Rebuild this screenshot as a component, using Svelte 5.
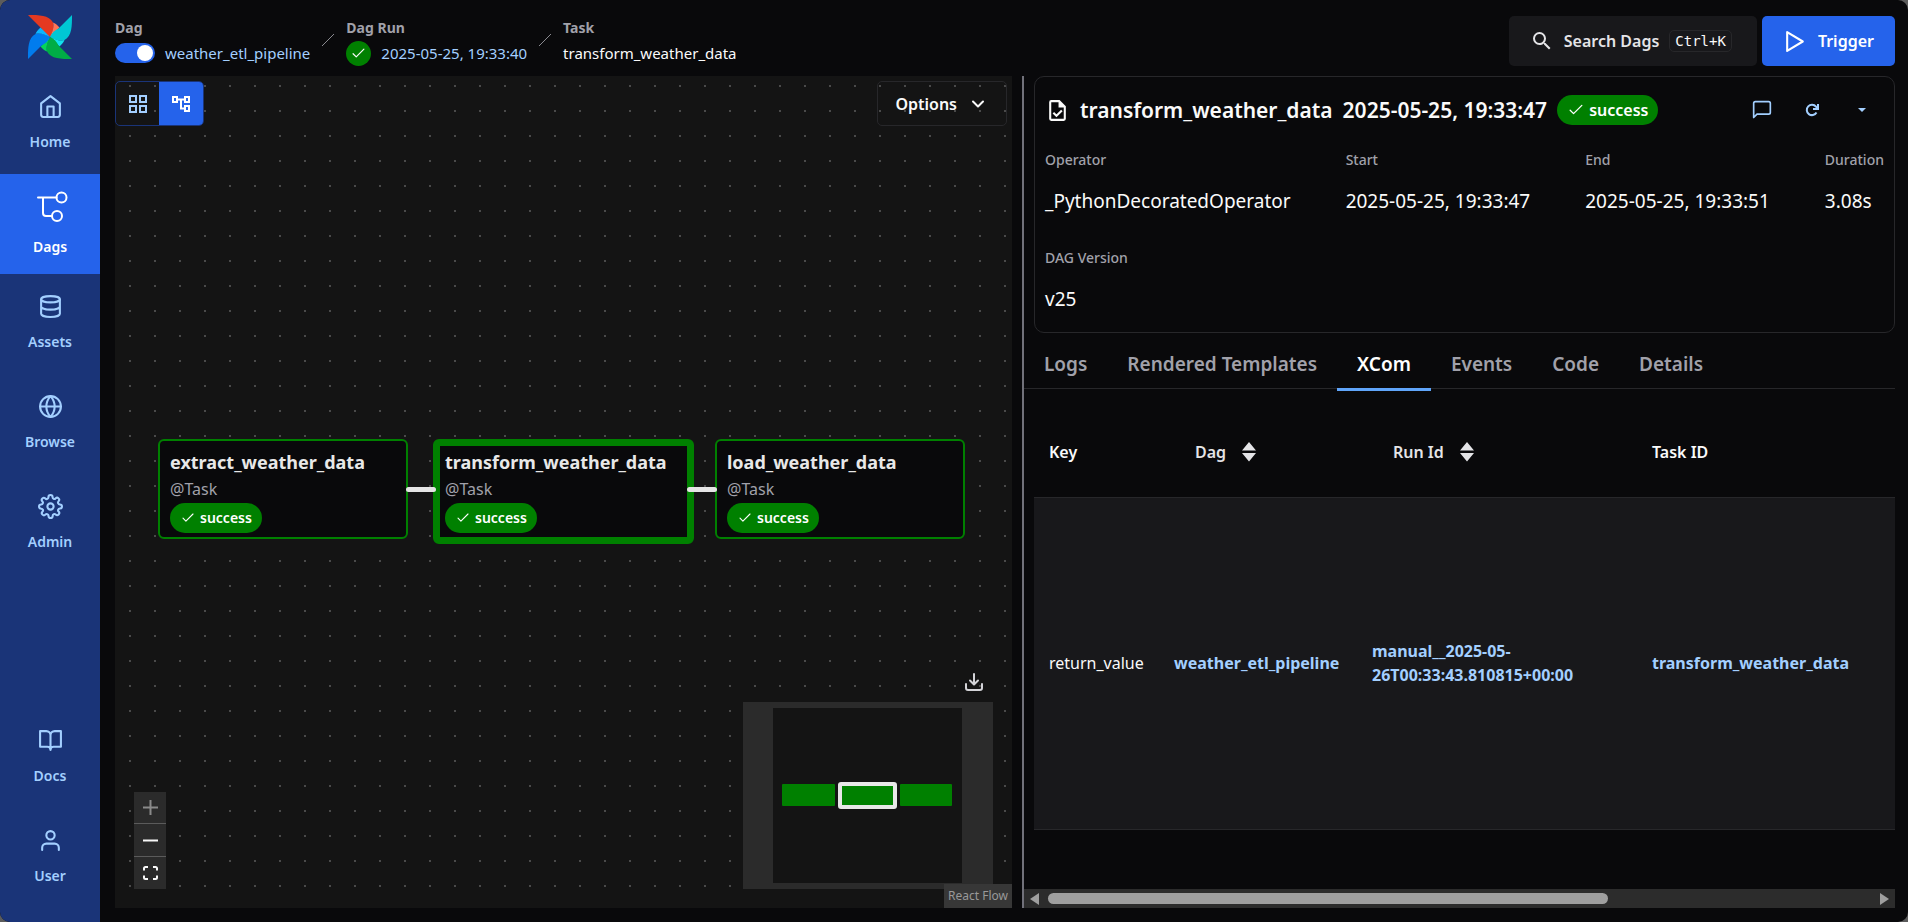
<script>
  const nav = [
    { label: 'Home', icon: 'home' },
    { label: 'Dags', icon: 'dags', active: true },
    { label: 'Assets', icon: 'database' },
    { label: 'Browse', icon: 'globe' },
    { label: 'Admin', icon: 'settings' }
  ];
  const navBottom = [
    { label: 'Docs', icon: 'book' },
    { label: 'User', icon: 'user' }
  ];
  const blades = [
    { angle: 0, dark: '#e43921', light: '#ff7557' },
    { angle: 90, dark: '#00c7d4', light: '#11e1ee' },
    { angle: 180, dark: '#00ad46', light: '#04d659' },
    { angle: 270, dark: '#017cee', light: '#0cb6ff' }
  ];
  const nodes = [
    { name: 'extract_weather_data', left: 43, width: 250 },
    { name: 'transform_weather_data', left: 318, width: 261, selected: true },
    { name: 'load_weather_data', left: 600, width: 250 }
  ];
  const edges = [291, 572];
  const stats = [
    { label: 'Operator', value: '_PythonDecoratedOperator' },
    { label: 'Start', value: '2025-05-25, 19:33:47' },
    { label: 'End', value: '2025-05-25, 19:33:51' },
    { label: 'Duration', value: '3.08s' }
  ];
  const tabs = ['Logs', 'Rendered Templates', 'XCom', 'Events', 'Code', 'Details'];
  let activeTab = $state('XCom');
  let enabled = $state(true);
</script>

{#snippet check(size)}
  <svg width={size} height={size} viewBox="0 0 12 12" fill="none" stroke="currentColor" stroke-width="1.1" stroke-linecap="round" stroke-linejoin="round" aria-hidden="true"><path d="M1 6.2 3.9 9.1 11 2" /></svg>
{/snippet}

{#snippet sortIcon()}
  <svg width="14" height="20" viewBox="0 0 14 20" fill="currentColor" aria-hidden="true"><path d="M7 0 14 8.5H0zM0 11h14L7 19.500z" /></svg>
{/snippet}

{#snippet navItem(item)}
  <a class="nav-item" class:active={item.active} href="#{item.icon}">
    {#if item.icon === 'dags'}
      <svg width="36" height="35" viewBox="0 0 36 35" fill="none" stroke="currentColor" stroke-width="2" stroke-linecap="round" aria-hidden="true">
        <path d="M6 8.500h18.500M11 8.500V24a3 3 0 0 0 3 3h6" /><circle cx="29.500" cy="8.500" r="5" /><circle cx="25" cy="27" r="5" />
      </svg>
    {:else}
      <svg width="25" height="25" viewBox="0 0 24 24" fill="none" stroke="currentColor" stroke-width="2" stroke-linecap="round" stroke-linejoin="round" aria-hidden="true">
        {#if item.icon === 'home'}
          <path d="M3 9l9-7 9 7v11a2 2 0 0 1-2 2H5a2 2 0 0 1-2-2zM9 22V12h6v10" />
        {:else if item.icon === 'database'}
          <ellipse cx="12" cy="5" rx="9" ry="3" /><path d="M21 12c0 1.66-4 3-9 3s-9-1.34-9-3M3 5v14c0 1.66 4 3 9 3s9-1.34 9-3V5" />
        {:else if item.icon === 'globe'}
          <circle cx="12" cy="12" r="10" /><path d="M2 12h20M12 2a15.3 15.3 0 0 1 4 10 15.3 15.3 0 0 1-4 10 15.3 15.3 0 0 1-4-10 15.3 15.3 0 0 1 4-10z" />
        {:else if item.icon === 'settings'}
          <circle cx="12" cy="12" r="3" /><path d="M19.4 15a1.65 1.65 0 0 0 .33 1.82l.06.06a2 2 0 0 1-2.83 2.83l-.06-.06a1.65 1.65 0 0 0-2.8 1.18V21a2 2 0 0 1-4 0v-.09A1.65 1.65 0 0 0 9 19.4a1.65 1.65 0 0 0-1.82.33l-.06.06a2 2 0 0 1-2.83-2.83l.06-.06a1.65 1.65 0 0 0-1.18-2.8H3a2 2 0 0 1 0-4h.09A1.65 1.65 0 0 0 4.6 9a1.65 1.65 0 0 0-.33-1.82l-.06-.06a2 2 0 0 1 2.83-2.83l.06.06A1.65 1.65 0 0 0 9 4.68a1.65 1.65 0 0 0 1-1.51V3a2 2 0 0 1 4 0v.09a1.65 1.65 0 0 0 2.82 1.17l.06-.06a2 2 0 0 1 2.83 2.83l-.06.06A1.65 1.65 0 0 0 19.4 9a1.65 1.65 0 0 0 1.51 1H21a2 2 0 0 1 0 4h-.09a1.65 1.65 0 0 0-1.51 1z" />
        {:else if item.icon === 'book'}
          <path d="M2 3h6a4 4 0 0 1 4 4v14a3 3 0 0 0-3-3H2zM22 3h-6a4 4 0 0 0-4 4v14a3 3 0 0 1 3-3h7z" />
        {:else}
          <path d="M20 21v-2a4 4 0 0 0-4-4H8a4 4 0 0 0-4 4v2" /><circle cx="12" cy="7" r="4" />
        {/if}
      </svg>
    {/if}
    <span>{item.label}</span>
  </a>
{/snippet}

<div class="shell">
  <nav class="sidebar" aria-label="Main">
    <a class="logo" href="#top" aria-label="Airflow">
      <svg width="44" height="44" viewBox="0 0 44 44" aria-hidden="true">
        {#each blades as b}
          <g transform="rotate({b.angle} 22 22)">
            <path fill={b.dark} d="M0 0C11 0 21 0 25 7.5 26.5 12 24 19 22 22 18 20.500 15 17 13.500 13.500z" />
            <path fill={b.light} d="M25 7.500C28 8.500 30 11 31.500 12.500L22 22C24 18 26.500 12 25 7.500z" />
          </g>
        {/each}
      </svg>
    </a>
    {#each nav as item}{@render navItem(item)}{/each}
    <div class="grow"></div>
    {#each navBottom as item}{@render navItem(item)}{/each}
  </nav>

  <div class="page">
    <header class="topbar">
      <div class="crumb">
        <span class="crumb-label">Dag</span>
        <div class="crumb-value">
          <input class="switch" type="checkbox" role="switch" aria-label="Dag enabled" bind:checked={enabled} />
          <a href="#dag">weather_etl_pipeline</a>
        </div>
      </div>
      <svg class="slash" width="12" height="12" viewBox="0 0 12 12" stroke="currentColor" aria-hidden="true"><path d="M0 12 12 0" /></svg>
      <div class="crumb">
        <span class="crumb-label">Dag Run</span>
        <div class="crumb-value">
          <span class="run-state">{@render check(13)}</span>
          <a href="#run">2025-05-25, 19:33:40</a>
        </div>
      </div>
      <svg class="slash" width="12" height="12" viewBox="0 0 12 12" stroke="currentColor" aria-hidden="true"><path d="M0 12 12 0" /></svg>
      <div class="crumb">
        <span class="crumb-label">Task</span>
        <div class="crumb-value"><span>transform_weather_data</span></div>
      </div>
      <div class="grow"></div>
      <div class="actions">
        <button class="search">
          <svg width="24" height="24" viewBox="0 0 24 24" fill="currentColor" aria-hidden="true"><path d="M15.500 14h-.790l-.280-.270A6.471 6.471 0 0 0 16 9.500 6.500 6.500 0 1 0 9.500 16c1.610 0 3.090-.590 4.230-1.570l.270.280v.790l5 4.990L20.490 19l-4.990-5zm-6 0C7.010 14 5 11.990 5 9.500S7.010 5 9.500 5 14 7.010 14 9.500 11.990 14 9.500 14z" /></svg>
          <span>Search Dags</span>
          <kbd>Ctrl+K</kbd>
        </button>
        <button class="trigger">
          <svg width="25" height="25" viewBox="0 0 24 24" fill="none" stroke="currentColor" stroke-width="2" stroke-linejoin="round" aria-hidden="true"><path d="M4 3l15 9-15 9z" /></svg>
          <span>Trigger</span>
        </button>
      </div>
    </header>

    <main class="split">
      <section class="graph" aria-label="Graph">
        <div class="view-toggle">
          <button aria-label="Grid view">
            <svg width="20" height="20" viewBox="0 0 20 20" fill="none" stroke="currentColor" stroke-width="2" aria-hidden="true"><path d="M2 2h6v6H2zM12 2h6v6h-6zM2 12h6v6H2zM12 12h6v6h-6z" /></svg>
          </button>
          <button class="on" aria-label="Graph view">
            <svg width="20" height="20" viewBox="0 0 20 20" fill="none" stroke="currentColor" stroke-width="2" aria-hidden="true"><path d="M2 3h4v5H2zM14 3h4v5h-4zM14 12h4v5h-4zM6 5.500h8M10 5.500v9h4" /></svg>
          </button>
        </div>
        <button class="options">
          <span>Options</span>
          <svg width="14" height="14" viewBox="0 0 14 14" fill="none" stroke="currentColor" stroke-width="2" stroke-linecap="round" stroke-linejoin="round" aria-hidden="true"><path d="M2 4.500 7 9.500 12 4.500" /></svg>
        </button>

        {#each nodes as n}
          <div class="node" class:selected={n.selected} style="left: {n.left}px; width: {n.width}px">
            <strong>{n.name}</strong>
            <span class="kind">@Task</span>
            <span class="badge">{@render check(12)} success</span>
          </div>
        {/each}
        {#each edges as left}
          <div class="edge" style="left: {left}px"></div>
        {/each}

        <div class="controls">
          <button disabled aria-label="Zoom in"><svg width="15" height="15" viewBox="0 0 15 15" stroke="currentColor" stroke-width="2" aria-hidden="true"><path d="M0 7.500h15M7.500 0v15" /></svg></button>
          <button aria-label="Zoom out"><svg width="15" height="15" viewBox="0 0 15 15" stroke="currentColor" stroke-width="2" aria-hidden="true"><path d="M0 7.500h15" /></svg></button>
          <button aria-label="Fit view"><svg width="15" height="14" viewBox="0 0 15 14" fill="none" stroke="currentColor" stroke-width="2" aria-hidden="true"><path d="M1 4.500V2.500Q1 1 2.500 1H5M10 1h2.500Q14 1 14 2.500v2M14 9.500v2Q14 13 12.500 13H10M5 13H2.500Q1 13 1 11.500v-2" /></svg></button>
        </div>

        <button class="download" aria-label="Download image">
          <svg width="18" height="18" viewBox="0 0 18 18" fill="none" stroke="currentColor" stroke-width="2" stroke-linecap="round" stroke-linejoin="round" aria-hidden="true"><path d="M9 1v10M5 7.500 9 11.500 13 7.500M1 11v4q0 2 2 2h12q2 0 2-2v-4" /></svg>
        </button>
        <svg class="minimap" width="250" height="187" viewBox="0 0 250 187" role="img" aria-label="Mini map">
          <path fill="#2b2b2b" d="M0 0h250v187H0z" />
          <path fill="#141414" d="M30 6h189v175H30z" />
          <rect x="39" y="82" width="53" height="22" rx="1" fill="#008000" />
          <rect x="97" y="82" width="55" height="23" rx="1" fill="#008000" stroke="#e8e8e8" stroke-width="4" />
          <rect x="157" y="82" width="52" height="22" rx="1" fill="#008000" />
        </svg>
        <a class="attribution" href="#react-flow">React Flow</a>
      </section>

      <div class="divider"></div>

      <section class="details" aria-label="Task instance">
        <div class="card">
          <div class="card-head">
            <svg width="25" height="25" viewBox="0 0 24 24" fill="currentColor" aria-hidden="true"><path d="M6 2a2 2 0 0 0-2 2v16a2 2 0 0 0 2 2h12a2 2 0 0 0 2-2V8l-6-6zm0 2h7v5h5v11H6z" /><path d="M8 14.200 11 17l5.200-5" fill="none" stroke="currentColor" stroke-width="2" /></svg>
            <h1>transform_weather_data</h1>
            <h1>2025-05-25, 19:33:47</h1>
            <span class="badge large">{@render check(14)} success</span>
            <div class="grow"></div>
            <button aria-label="Add a note"><svg width="20" height="20" viewBox="0 0 24 24" fill="none" stroke="currentColor" stroke-width="2" stroke-linejoin="round" aria-hidden="true"><path d="M22 15a2 2 0 0 1-2 2H6l-4 4V4a2 2 0 0 1 2-2h16a2 2 0 0 1 2 2z" /></svg></button>
            <button aria-label="Clear task instance"><svg width="14" height="14" viewBox="0 0 14 14" fill="none" stroke="currentColor" stroke-width="2" aria-hidden="true"><path d="M11.500 9.500A5.200 5.200 0 1 1 11 3.600L12.500 5.500M13 1v5H8" /></svg></button>
            <button aria-label="Mark task instance as"><svg width="8" height="4" viewBox="0 0 8 4" fill="currentColor" aria-hidden="true"><path d="M0 0h8L4 4z" /></svg></button>
          </div>
          <dl class="stats">
            {#each stats as s}
              <div><dt>{s.label}</dt><dd>{s.value}</dd></div>
            {/each}
          </dl>
          <dl class="stats version">
            <div><dt>DAG Version</dt><dd>v25</dd></div>
          </dl>
        </div>

        <div class="tabs" role="tablist">
          {#each tabs as t}
            <button role="tab" aria-selected={activeTab === t} class:current={activeTab === t} onclick={() => (activeTab = t)}>{t}</button>
          {/each}
        </div>

        <div class="table-wrap">
          <table>
            <colgroup><col class="c-key" /><col class="c-dag" /><col class="c-run" /><col /></colgroup>
            <thead>
              <tr>
                <th>Key</th>
                <th><button>Dag {@render sortIcon()}</button></th>
                <th><button>Run Id {@render sortIcon()}</button></th>
                <th>Task ID</th>
              </tr>
            </thead>
            <tbody>
              <tr>
                <td>return_value</td>
                <td><a href="#dag">weather_etl_pipeline</a></td>
                <td><a href="#run">manual__2025-05-26T00:33:43.810815+00:00</a></td>
                <td><a href="#task">transform_weather_data</a></td>
              </tr>
            </tbody>
          </table>
        </div>

        <div class="scrollbar" aria-hidden="true">
          <svg width="10" height="12" viewBox="0 0 10 12" fill="currentColor"><path d="M9 0v12L0 6z" /></svg>
          <div class="track"><div class="thumb"></div></div>
          <svg width="10" height="12" viewBox="0 0 10 12" fill="currentColor"><path d="M1 0v12l9-6z" /></svg>
        </div>
      </section>
    </main>
  </div>
</div>

<style>
  :global(body) {
    margin: 0;
    background: #5c5c5c;
  }
  * {
    box-sizing: border-box;
  }
  .shell {
    display: flex;
    min-height: 100vh;
    overflow: hidden;
    border-radius: 10px;
    background: #09090b;
    color: #fafafa;
    font-family: 'Noto Sans', 'Open Sans', sans-serif;
    font-size: 16px;
    line-height: 24px;
  }
  svg {
    display: block;
    flex: none;
  }
  a {
    color: #a3cfff;
    text-decoration: none;
  }
  button {
    margin: 0;
    padding: 0;
    border: 0;
    background: none;
    color: inherit;
    font: inherit;
    cursor: pointer;
  }
  .grow {
    flex: 1;
  }

  .sidebar {
    display: flex;
    flex-direction: column;
    flex: none;
    width: 100px;
    padding-bottom: 14px;
    background: #1a3478;
  }
  .logo {
    display: flex;
    justify-content: center;
    height: 74px;
    padding-top: 15px;
  }
  .nav-item {
    display: flex;
    flex-direction: column;
    align-items: center;
    justify-content: center;
    gap: 13px;
    height: 100px;
    padding-bottom: 2px;
    font-size: 14px;
    font-weight: 600;
    line-height: 20px;
  }
  .nav-item.active {
    background: #2563eb;
    color: #fff;
  }

  .page {
    display: flex;
    flex-direction: column;
    flex: 1;
    min-width: 0;
    padding: 0 13px 14px 15px;
  }
  .topbar {
    display: flex;
    align-items: flex-end;
    gap: 12px;
    height: 76px;
    padding-bottom: 10px;
  }
  .crumb-label {
    display: block;
    color: #a1a1aa;
    font-size: 14px;
    font-weight: 700;
    line-height: 24px;
  }
  .crumb-value {
    display: flex;
    align-items: center;
    gap: 10px;
    height: 26px;
    font-size: 15px;
  }
  .slash {
    margin-bottom: 20px;
    color: #8a8a90;
  }
  .switch {
    appearance: none;
    display: flex;
    width: 40px;
    height: 20px;
    margin: 0;
    padding: 2px;
    border-radius: 10px;
    background: #3f3f46;
  }
  .switch::before {
    content: '';
    width: 16px;
    height: 16px;
    border-radius: 50%;
    background: #fff;
  }
  .switch:checked {
    justify-content: flex-end;
    background: #2563eb;
  }
  .run-state {
    display: grid;
    place-items: center;
    width: 25px;
    height: 25px;
    border-radius: 50%;
    background: #008000;
  }
  .actions {
    display: flex;
    gap: 5px;
  }
  .search,
  .trigger {
    display: flex;
    align-items: center;
    gap: 10px;
    height: 50px;
    border-radius: 5px;
    font-weight: 600;
  }
  .search {
    padding: 0 25px 0 21px;
    background: #18181b;
    color: #e4e4e7;
  }
  kbd {
    padding: 0 5px;
    border: 1px solid #27272a;
    border-radius: 5px;
    color: #fafafa;
    font-family: 'DejaVu Sans Mono', monospace;
    font-size: 14px;
    font-weight: 400;
    line-height: 20px;
  }
  .trigger {
    padding: 0 21px;
    background: #2563eb;
    color: #fff;
  }

  .split {
    display: grid;
    grid-template-columns: minmax(0, 897fr) 12px minmax(0, 871fr);
    flex: 1;
  }
  .graph {
    position: relative;
    min-height: 832px;
    background-color: #141414;
    background-image: radial-gradient(circle at 1px 1px, #4a4a4a 1px, transparent 1px);
    background-position: 14px 9px;
    background-size: 25px 25px;
  }
  .divider {
    margin-left: 10px;
    background: #71717a;
  }
  .view-toggle {
    position: absolute;
    top: 5px;
    left: 0;
    display: flex;
    overflow: hidden;
    border: 1px solid #1a3478;
    border-radius: 5px;
    color: #a3cfff;
  }
  .view-toggle button {
    display: grid;
    place-items: center;
    width: 43px;
    height: 43px;
  }
  .view-toggle .on {
    width: 44px;
    background: #2563eb;
    color: #fff;
  }
  .options {
    position: absolute;
    top: 5px;
    right: 5px;
    display: flex;
    align-items: center;
    gap: 14px;
    height: 45px;
    padding: 0 21px 0 17px;
    border: 1px solid #27272a;
    border-radius: 5px;
    font-weight: 600;
  }
  .node {
    position: absolute;
    top: 363px;
    display: flex;
    flex-direction: column;
    align-items: flex-start;
    height: 100px;
    padding: 7px 10px 0;
    border: 2px solid #008000;
    border-radius: 6px;
    background: #09090b;
    color: #e8e8e8;
  }
  .node.selected {
    height: 105px;
    padding: 2px 5px 0;
    border-width: 7px;
  }
  .node strong {
    font-size: 18px;
    line-height: 28px;
  }
  .kind {
    color: #a1a1aa;
    line-height: 27px;
  }
  .badge {
    display: flex;
    align-items: center;
    flex: none;
    gap: 6px;
    height: 30px;
    padding: 0 10px 0 12px;
    border-radius: 15px;
    background: #008000;
    color: #fff;
    font-size: 14px;
    font-weight: 600;
  }
  .badge.large {
    font-size: 16px;
  }
  .edge {
    position: absolute;
    top: 411px;
    width: 30px;
    height: 5px;
    border-radius: 3px;
    background: #e5e5e5;
  }
  .controls {
    position: absolute;
    bottom: 19px;
    left: 19px;
    display: flex;
    flex-direction: column;
    gap: 1px;
    background: #5b5b5b;
  }
  .controls button {
    display: grid;
    place-items: center;
    width: 32px;
    height: 32px;
    background: #2b2b2b;
    color: #f8f8f8;
  }
  .controls button:disabled {
    height: 31px;
    color: #8a8a8a;
  }
  .download {
    position: absolute;
    right: 29px;
    bottom: 217px;
    color: #d4d4d8;
  }
  .minimap {
    position: absolute;
    right: 19px;
    bottom: 19px;
  }
  .attribution {
    position: absolute;
    right: 0;
    bottom: 0;
    padding: 0 4px;
    background: #373737;
    color: #999;
    font-size: 12px;
    line-height: 24px;
  }

  .details {
    display: flex;
    flex-direction: column;
    min-width: 0;
  }
  .card {
    margin-left: 10px;
    padding: 9px 10px 18px;
    border: 1px solid #27272a;
    border-radius: 10px;
  }
  .card-head {
    display: flex;
    align-items: center;
    gap: 10px;
    height: 48px;
    padding-right: 2px;
  }
  h1 {
    margin: 0;
    font-size: 21px;
    font-weight: 600;
    line-height: 32px;
  }
  .card-head button {
    display: grid;
    place-items: center;
    width: 40px;
    height: 40px;
    color: #a3cfff;
  }
  .stats {
    display: flex;
    justify-content: space-between;
    margin: 14px 0 0;
  }
  .stats.version {
    margin-top: 30px;
  }
  dt {
    color: #a1a1aa;
    font-size: 14px;
    font-weight: 500;
    line-height: 24px;
  }
  dd {
    margin: 14px 0 0;
    font-size: 19px;
    line-height: 30px;
  }
  .tabs {
    display: flex;
    height: 56px;
    border-bottom: 1px solid #27272a;
  }
  .tabs button {
    height: 58px;
    padding: 7px 20px 0;
    border-bottom: 3px solid transparent;
    color: #a1a1aa;
    font-size: 19px;
    font-weight: 600;
  }
  .tabs .current {
    border-color: #60a5fa;
    color: #fff;
  }
  .table-wrap {
    flex: 1;
    margin-left: 10px;
    overflow: hidden;
  }
  table {
    width: 100%;
    border-collapse: collapse;
    table-layout: fixed;
  }
  .c-key {
    width: 125px;
  }
  .c-dag {
    width: 198px;
  }
  .c-run {
    width: 280px;
  }
  th,
  td {
    padding: 0 15px;
    border-bottom: 1px solid #27272a;
    text-align: left;
  }
  th {
    height: 108px;
    padding-top: 19px;
    font-weight: 600;
  }
  th button {
    display: flex;
    align-items: center;
    gap: 16px;
    padding-left: 21px;
    color: #e4e4e7;
  }
  td {
    height: 332px;
    background: #18181b;
  }
  td a {
    font-weight: 700;
  }
  .scrollbar {
    display: flex;
    align-items: center;
    gap: 8px;
    height: 19px;
    padding: 0 6px;
    background: #2c2c2c;
    color: #9f9f9f;
  }
  .track {
    flex: 1;
  }
  .thumb {
    width: 68%;
    height: 11px;
    border-radius: 6px;
    background: #9f9f9f;
  }
</style>
